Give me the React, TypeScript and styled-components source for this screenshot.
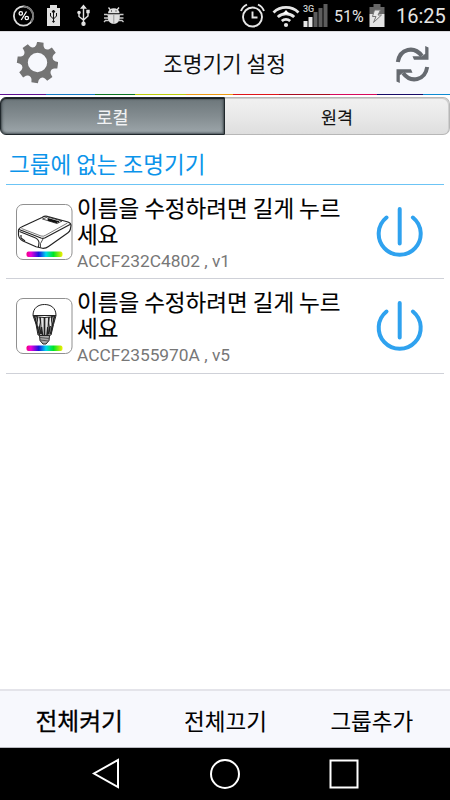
import React from "react";
import styled, { createGlobalStyle } from "styled-components";

const Global = createGlobalStyle`
  * { box-sizing: border-box; }
  body { margin: 0; background: #fff; }
`;

const Screen = styled.div`
  width: 450px;
  height: 800px;
  display: flex;
  flex-direction: column;
  overflow: hidden;
  background: #fff;
  color: #000;
  font-family: Roboto, "Noto Sans CJK KR", sans-serif;
`;

const StatusBar = styled.header`
  height: 31px;
  flex: none;
  background: #000;
  display: flex;
  align-items: center;
  justify-content: space-between;
`;

const StatusGroup = styled.div`
  height: 31px;
  display: flex;
  align-items: center;
`;

const StatusIcon = styled.svg`
  display: block;
  flex: none;
  height: 31px;
`;

const BatteryText = styled.span`
  width: 32px;
  margin-left: 6px;
  font-size: 16px;
  line-height: 31px;
  white-space: nowrap;
  color: #e4e4e4;
  padding-top: 2px;
`;

const Clock = styled.span`
  width: 54px;
  font-size: 20px;
  line-height: 31px;
  padding-top: 2px;
  white-space: nowrap;
  color: #e4e4e4;
`;

const TitleBar = styled.div`
  height: 63px;
  flex: none;
  background: #f7f8fd;
  border-top: 1px solid #dcdce0;
  display: flex;
  align-items: center;
  justify-content: space-between;
  padding: 0 20px 0 16px;
`;

const Title = styled.h1`
  margin: 0;
  padding-left: 3px;
  font: 400 21.4px/30px "Noto Sans CJK KR", sans-serif;
  color: #111;
`;

const BarIcon = styled.svg`
  display: block;
  width: 42px;
  height: 42px;
`;

const Stripe = styled.div`
  height: 1px;
  flex: none;
  display: flex;
`;

const Segment = styled.i<{ $w: number; $c: string }>`
  width: ${(p) => p.$w}px;
  background: ${(p) => p.$c};
`;

const Tabs = styled.div`
  height: 38px;
  flex: none;
  margin-top: 2px;
  display: flex;
`;

const Tab = styled.button<{ $active?: boolean }>`
  width: 225px;
  margin: 0;
  padding: 2px 0 0;
  font: 400 17.4px/30px "Noto Sans CJK KR", sans-serif;
  -webkit-text-stroke: 0.1px currentColor;
  color: ${(p) => (p.$active ? "#f2f3f5" : "#111")};
  border: ${(p) => (p.$active ? "1px solid #20282c" : "1px solid #b7b7b7")};
  border-left-width: ${(p) => (p.$active ? "1px" : "0")};
  border-radius: ${(p) => (p.$active ? "6px 0 0 6px" : "0 7px 7px 0")};
  background: ${(p) =>
    p.$active
      ? "linear-gradient(#6c767a, #838c90 50%, #9da6ab)"
      : "linear-gradient(#f1f1f1, #e9e9e9 50%, #dedede)"};
  box-shadow: ${(p) =>
    p.$active
      ? "inset 0 1px 1px #15191b, inset 1px 0 3px #4b5458, inset -1px 0 3px #4b5458, inset 0 -1px 2px #7b8488"
      : "inset -1px 1px 0 #cfcfcf"};
`;

const Content = styled.main`
  flex: 1;
  padding: 0 6px;
`;

const SectionTitle = styled.h2`
  margin: 0;
  height: 50px;
  padding: 13px 0 0 3px;
  font: 400 22.5px/30px "Noto Sans CJK KR", sans-serif;
  color: #0b94ea;
  border-bottom: 1px solid #6cc4f5;
`;

const Row = styled.article`
  height: 94px;
  display: flex;
  border-bottom: 1px solid #cfd1d8;

  &:last-child {
    height: 95px;
  }
`;

const Thumb = styled.svg`
  width: 58px;
  height: 58px;
  flex: none;
  margin: 18px 4px 0 9px;
`;

const Info = styled.div`
  width: 282px;
  padding-top: 9px;
`;

const Name = styled.div`
  font: 400 22.5px/26px "Noto Sans CJK KR", sans-serif;
  -webkit-text-stroke: 0.15px currentColor;
  white-space: pre-line;
`;

const Detail = styled.div`
  margin-top: 5px;
  font-size: 17.35px;
  line-height: 21px;
  color: #777;
  white-space: nowrap;
`;

const PowerIcon = styled.svg`
  width: 54px;
  height: 58px;
  flex: none;
  margin: 17px 0 0 13px;
`;

const ActionBar = styled.div`
  height: 59px;
  flex: none;
  display: flex;
  border-top: 2px solid #e4e4ea;
  border-bottom: 1px solid #b9bac0;
  background: #f7f8fd;
  padding: 0 5px 0 6px;
`;

const Action = styled.button<{ $strong?: boolean }>`
  flex: 1;
  border: 0;
  background: none;
  padding: 1px 0 0;
  font: 400 ${(p) => (p.$strong ? "23.8px" : "22.5px")}/32px "Noto Sans CJK KR", sans-serif;
  -webkit-text-stroke: ${(p) => (p.$strong ? "0.3px" : "0.1px")} currentColor;
  color: #000;
  white-space: nowrap;
`;

const NavBar = styled.footer`
  height: 52px;
  flex: none;
  background: #000;
  display: flex;
  justify-content: space-between;
  align-items: flex-start;
  padding: 10px 91px 0 90px;
`;

const NavIcon = styled.svg`
  width: 32px;
  height: 32px;
  fill: none;
  stroke: #fff;
  stroke-width: 2;
`;

const stripe: [number, string][] = [
  [46, "#5c1092"], [49, "#1278c4"], [40, "#0a7420"], [51, "#bdcc08"], [47, "#ee9a12"],
  [46, "#df1419"], [51, "#a80a20"], [47, "#d6095c"], [46, "#160b68"], [27, "#0d8ad2"],
];

const LeftStatus = () => (
  <StatusIcon width="140" viewBox="0 0 140 31" fill="none">
    <circle cx="23.500" cy="16" r="9.600" stroke="#ddd" strokeWidth="1.800" />
    <path d="M23.500 6.400A9.600 9.600 0 0 1 31 22" stroke="#777" strokeWidth="2" />
    <circle cx="20.800" cy="13.400" r="1.700" stroke="#fff" strokeWidth="1.300" />
    <circle cx="26.800" cy="18" r="1.700" stroke="#fff" strokeWidth="1.300" />
    <path d="M26.500 11.500l-5.300 8.500" stroke="#fff" strokeWidth="1.300" />
    <path d="M47 8h3V5h7v3h3v18H47z" fill="#e0e0e0" />
    <g stroke="#111" strokeWidth="1"><path d="M53.500 10v12M50.500 13v3l3 3 3-3v-3" /><path d="M52 12l1.500-2 1.500 2z" fill="#111" /><circle cx="53.500" cy="21.500" r=".8" fill="#111" /></g>
    <g stroke="#e4e4e4" strokeWidth="1.400"><path d="M83.500 7v16M79 13v3.500l4.500 3.500 4.500-4V11" /><path d="M81.500 8l2-2.500 2 2.500z" fill="#e4e4e4" /><circle cx="83.500" cy="23.700" r="1.500" fill="#e4e4e4" /><circle cx="79" cy="12.500" r="1.100" fill="#e4e4e4" /><path d="M87 10.500h2v2h-2z" fill="#e4e4e4" /></g>
    <path d="M108 13.200a5.800 5 0 0 1 11.600 0zM107.800 14.300h12V18a6 6 0 0 1-12 0z" fill="#e0e0e0" />
    <path d="M110.500 10l-2-2.500M117 10l2-2.500" stroke="#e0e0e0" strokeWidth="1.300" />
    <path d="M104 14.500h3l1.500 1M104 18h4.500M104 22l1.500-1.500h3.500M123.500 14.500h-3l-1.500 1M123.500 18H119M123.500 22l-1.500-1.500h-3.500" stroke="#c8c8c8" strokeWidth="1.300" />
    <path d="M113.800 14.500v9.500" stroke="#999" />
    <path d="M111 11h1M115.500 11h1" stroke="#111" />
  </StatusIcon>
);

const SignalLabel = styled.text`
  font: 500 9px Roboto, sans-serif;
  fill: #ccc;
`;

const SignalStatus = () => (
  <StatusIcon width="90" viewBox="238 0 90 31" fill="none">
    <g stroke="#e6e6e6" strokeWidth="1.900">
      <circle cx="252.500" cy="17" r="9.500" /><path d="M252.500 11.500v6h5" />
      <path d="M241 11c1-3 3-5 6-6.500M264 11c-1-3-3-5-6-6.500" />
    </g>
    <g stroke="#e6e6e6" strokeWidth="2.800">
      <path d="M273.500 12.500a18 18 0 0 1 25 0" />
      <path d="M277.800 17a12 12 0 0 1 16.400 0" />
      <path d="M281.800 21a6.500 6.500 0 0 1 8.400 0" />
    </g>
    <circle cx="286" cy="25" r="2.100" fill="#e6e6e6" />
    <path d="M282.500 14l3.500-4 3.500 4z" fill="#fff" />
    <SignalLabel x="303" y="11.500">3G</SignalLabel>
    <path d="M303.500 21h4v6h-4zM308.500 17h4v10h-4z" fill="#e6e6e6" />
    <path d="M313.500 12h4v15h-4zM318.500 8h4v19h-4zM323.500 4h4v23h-4z" fill="#5d5d5d" />
  </StatusIcon>
);

const BatteryStatus = () => (
  <StatusIcon width="30" viewBox="367 0 30 31">
    <path d="M370.500 7h4V4h7v3h4v7h-15z" fill="#666" />
    <path d="M370.500 14h15v13h-15z" fill="#e4e4e4" />
    <path d="M375.500 10h6l-2.500 5h3.500l-8 7.500 2.500-6h-3.500z" fill="#e8e8e8" stroke="#777" strokeWidth="1" />
  </StatusIcon>
);

const gearPoint = (tooth: number, r: number, deg: number) => {
  const a = ((tooth * 45 + deg - 82) * Math.PI) / 180;
  return `${(r * Math.cos(a)).toFixed(2)} ${(r * Math.sin(a)).toFixed(2)}`;
};

const gearOutline = Array.from(
  { length: 8 },
  (_, i) =>
    `${i ? "L" : "M"}${gearPoint(i, 20.7, -9)}L${gearPoint(i, 20.7, 9)}` +
    `L${gearPoint(i, 17.6, 12)}Q${gearPoint(i, 14, 22.5)} ${gearPoint(i, 17.6, 33)}`,
).join("");

/* Eight broad teeth with concave valleys, turned slightly clockwise. */
const Gear = () => (
  <BarIcon viewBox="0 0 42 42">
    <g transform="translate(21.500 20.500)">
      <path
        fillRule="evenodd"
        fill="#747474"
        d={`${gearOutline}ZM-9.700 0a9.700 9.700 0 1 0 19.400 0a9.700 9.700 0 1 0-19.400 0Z`}
      />
    </g>
  </BarIcon>
);

const Refresh = () => (
  <BarIcon viewBox="388 42 42 42">
    <g fill="none" stroke="#666a70" strokeWidth="4">
      <path d="M397.800 62C400 48.500 414 45.500 422 56" />
      <path d="M427.200 67C425 80.500 411 83.500 403 73" />
    </g>
    <g fill="#666a70">
      <path d="M425.200 46l3.300 1.500v12.300h-14.500l-1.500-3.600h9.500l3.200-2.500z" />
      <path d="M399.800 83l-3.300-1.500V69.200H411l1.500 3.600H403l-3.200 2.500z" />
    </g>
  </BarIcon>
);

const Controller = () => (
  <g fill="none" stroke="#222" strokeWidth="1.150" strokeLinejoin="round">
    <path d="M3.500 27q.5-2 3-3L27 14.500q3-2 6-1l20 5.500q3 1 3 3.500l-.7 4q-.5 2-2.300 3.200L33.500 43.500q-2.500 2-6 1.800L21 43.700 8 38q-4-2-4.500-6z" />
    <path d="M4 26.500l4 1.500 18 7q3 1 5.500-1L55 21.500" />
    <path d="M6.500 25.500L26 33q2.500.7 4.500-.7L52.500 20" strokeWidth=".6" />
    <path d="M4.500 28.500l15 6q4 1.500 4.500 5l-.5 4.500M6 32v3l4 3" />
    <path d="M28 36l-2.500 4.500v4M27.500 16l5-2 14.500 4-5 2.500z" strokeWidth=".8" />
    <path d="M32.500 15.700L44 19M33 17l9 2.500" stroke="#111" strokeWidth="1.600" />
  </g>
);

const Bulb = () => (
  <g fill="none" stroke="#222" strokeWidth="1">
    <path d="M18 18.500C18 11 23 7.500 29.500 7.500s11.500 3.500 11.500 11z" fill="#fff" />
    <path d="M18 18.500q11.500 4 23 0l-2.500 9-2.500 10.500q-6.500 2.500-13 0L21 27z" fill="#d8d8d8" />
    <path d="M19.500 19l5 19M22 20l4 17M25 20l2.500 18M29.500 20v18M34 20l-2 18M37 19.500l-3.500 18M39.500 19l-4 18" strokeWidth="1.600" />
    <path d="M23.500 21.500v8M27 21v9M32 21v9M35.500 21v8" stroke="#eee" strokeWidth="1.100" />
    <path d="M24.500 38.500l.5 5 3 3.500h3l3-3.500.5-5z" fill="#aaa" />
    <path d="M25 40.500l9 1M25 43l8.500 1" stroke="#555" />
  </g>
);

const Device = ({ kind, detail }: { kind: "controller" | "bulb"; detail: string }) => (
  <Row>
    <Thumb viewBox="0 0 58 58">
      <defs>
        <linearGradient id={`hue-${kind}`}>
          <stop offset="0" stopColor="#f00080" /><stop offset=".12" stopColor="#f000d8" />
          <stop offset=".34" stopColor="#1515e0" /><stop offset=".54" stopColor="#00d8ef" />
          <stop offset=".75" stopColor="#00e624" /><stop offset="1" stopColor="#f4f000" />
        </linearGradient>
      </defs>
      <rect x="1.500" y="1.500" width="55.500" height="55" rx="6.500" fill="#fff" stroke="#909090" />
      {kind === "bulb" ? <Bulb /> : <Controller />}
      <rect x="11.500" y="48.500" width="36" height="5.500" rx="2" fill={`url(#hue-${kind})`} />
    </Thumb>
    <Info>
      <Name>{"이름을 수정하려면 길게 누르\n세요"}</Name>
      <Detail>{detail}</Detail>
    </Info>
    <PowerIcon viewBox="0 0 54 58" fill="none" stroke="#2fa2ef" strokeWidth="4" strokeLinecap="round">
      <path d="M27.700 7v34.500M14.500 15.500a21 21 0 1 0 26.400 0" />
    </PowerIcon>
  </Row>
);

export default function App() {
  return (
    <Screen>
      <Global />
      <StatusBar>
        <LeftStatus />
        <StatusGroup>
          <SignalStatus />
          <BatteryText>51%</BatteryText>
          <BatteryStatus />
          <Clock>16:25</Clock>
        </StatusGroup>
      </StatusBar>
      <TitleBar>
        <Gear />
        <Title>조명기기 설정</Title>
        <Refresh />
      </TitleBar>
      <Stripe>
        {stripe.map(([w, c]) => <Segment key={c} $w={w} $c={c} />)}
      </Stripe>
      <Tabs>
        <Tab $active>로컬</Tab>
        <Tab>원격</Tab>
      </Tabs>
      <Content>
        <SectionTitle>그룹에 없는 조명기기</SectionTitle>
        <Device kind="controller" detail="ACCF232C4802 , v1" />
        <Device kind="bulb" detail="ACCF2355970A , v5" />
      </Content>
      <ActionBar>
        <Action $strong>전체켜기</Action>
        <Action>전체끄기</Action>
        <Action>그룹추가</Action>
      </ActionBar>
      <NavBar>
        <NavIcon viewBox="-1 0 32 32"><path d="M27 2v27L3 15.500z" /></NavIcon>
        <NavIcon viewBox="0 0 32 32"><circle cx="16" cy="16" r="14" /></NavIcon>
        <NavIcon viewBox="-1 0 32 32"><path d="M2.500 2.500h27v27h-27z" /></NavIcon>
      </NavBar>
    </Screen>
  );
}
